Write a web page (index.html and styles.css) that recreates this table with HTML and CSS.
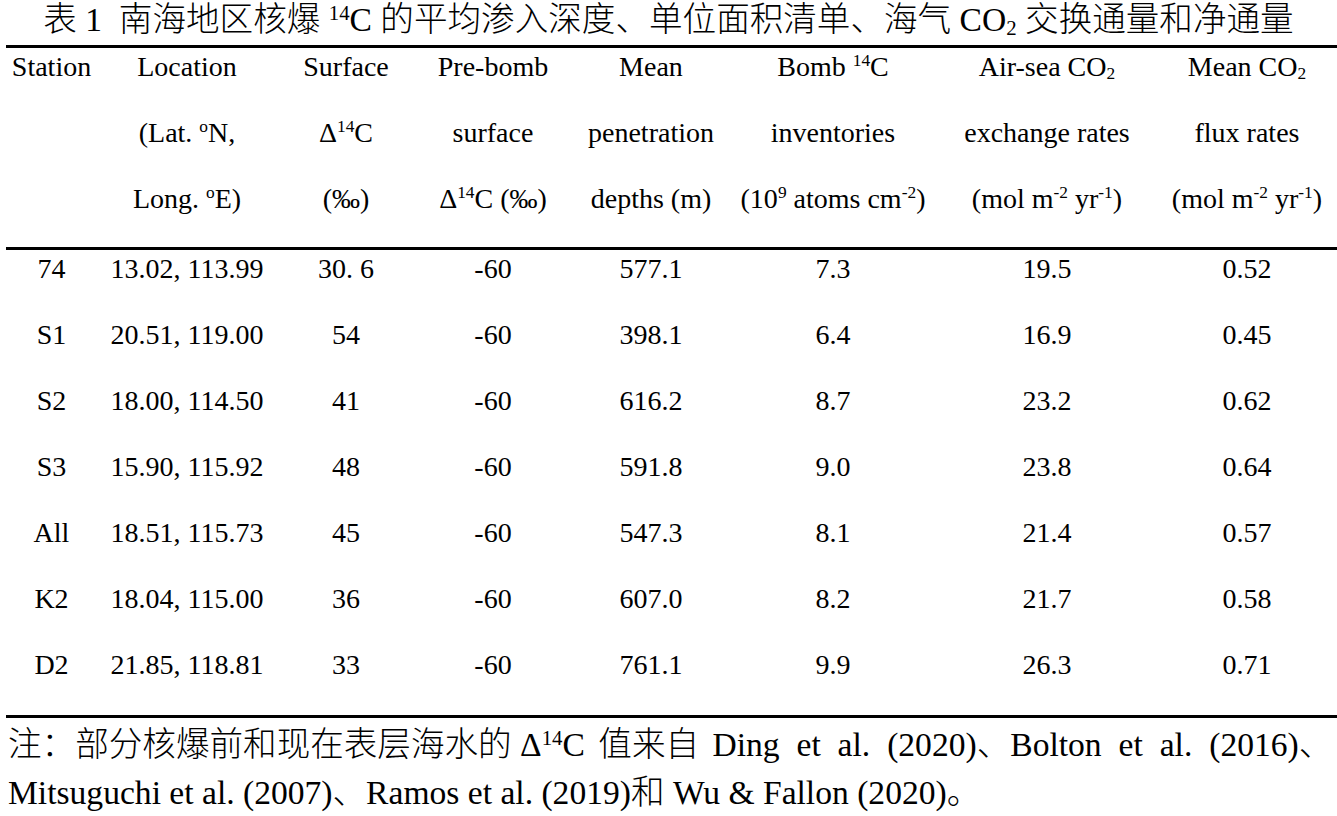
FILE: index.html
```html
<!DOCTYPE html>
<html lang="zh">
<head>
<meta charset="utf-8">
<title>表 1</title>
<link rel="stylesheet" href="styles.css">
</head>
<body>
<div class="page">
  <div class="title">表 1&nbsp; 南海地区核爆 <sup>14</sup>C 的平均渗入深度、单位面积清单、海气 CO<sub>2</sub> 交换通量和净通量</div>
  <div class="table">
    <div class="grid head">
      <div class="hcell"><span>Station</span></div>
      <div class="hcell"><span>Location</span><span>(Lat. <sup>o</sup>N,</span><span>Long. <sup>o</sup>E)</span></div>
      <div class="hcell"><span>Surface</span><span>Δ<sup>14</sup>C</span><span>(‰)</span></div>
      <div class="hcell"><span>Pre-bomb</span><span>surface</span><span>Δ<sup>14</sup>C (‰)</span></div>
      <div class="hcell"><span>Mean</span><span>penetration</span><span>depths (m)</span></div>
      <div class="hcell"><span>Bomb <sup>14</sup>C</span><span>inventories</span><span>(10<sup>9</sup> atoms cm<sup>-2</sup>)</span></div>
      <div class="hcell"><span>Air-sea CO<sub>2</sub></span><span>exchange rates</span><span>(mol m<sup>-2</sup> yr<sup>-1</sup>)</span></div>
      <div class="hcell"><span>Mean CO<sub>2</sub></span><span>flux rates</span><span>(mol m<sup>-2</sup> yr<sup>-1</sup>)</span></div>
    </div>
    <div class="grid body">
      <div>74</div><div>13.02, 113.99</div><div>30. 6</div><div>-60</div><div>577.1</div><div>7.3</div><div>19.5</div><div>0.52</div>
      <div>S1</div><div>20.51, 119.00</div><div>54</div><div>-60</div><div>398.1</div><div>6.4</div><div>16.9</div><div>0.45</div>
      <div>S2</div><div>18.00, 114.50</div><div>41</div><div>-60</div><div>616.2</div><div>8.7</div><div>23.2</div><div>0.62</div>
      <div>S3</div><div>15.90, 115.92</div><div>48</div><div>-60</div><div>591.8</div><div>9.0</div><div>23.8</div><div>0.64</div>
      <div>All</div><div>18.51, 115.73</div><div>45</div><div>-60</div><div>547.3</div><div>8.1</div><div>21.4</div><div>0.57</div>
      <div>K2</div><div>18.04, 115.00</div><div>36</div><div>-60</div><div>607.0</div><div>8.2</div><div>21.7</div><div>0.58</div>
      <div>D2</div><div>21.85, 118.81</div><div>33</div><div>-60</div><div>761.1</div><div>9.9</div><div>26.3</div><div>0.71</div>
    </div>
  </div>
  <div class="note">
    <p>注：部分核爆前和现在表层海水的 Δ<sup>14</sup>C<span class="cjkgap"> 值来自 </span><span class="spread">Ding et al. (2020)、Bolton et al. (2016)、</span></p>
    <p>Mitsuguchi et al. (2007)、Ramos et al. (2019)和 Wu &amp; Fallon (2020)。</p>
  </div>
</div>
</body>
</html>
```

FILE: styles.css
```css
html, body {
  margin: 0;
  padding: 0;
  background: #ffffff;
}
body {
  width: 1337px;
  height: 816px;
  overflow: hidden;
  color: #000;
  font-family: "Liberation Serif", "Noto Sans CJK SC", serif;
  font-weight: 300;
}
.page {
  display: flex;
  flex-direction: column;
}
sup, sub {
  font-size: 0.62em;
  line-height: 0;
}
sup { vertical-align: 0.55em; }
sub { vertical-align: -0.2em; }

.title {
  font-size: 33.6px;
  line-height: 40px;
  height: 40px;
  text-align: center;
  white-space: nowrap;
  margin-bottom: 5px;
}
.table {
  margin-left: 6px;
}
.grid {
  display: grid;
  grid-template-columns: 91px 180px 138px 156px 160px 204px 224px 176px;
  font-size: 28px;
  line-height: 38px;
  text-align: center;
  white-space: nowrap;
}
.head {
  border-top: 3px solid #000;
  padding-bottom: 29px;
}
.hcell {
  display: flex;
  flex-direction: column;
  align-items: center;
  gap: 28px;
}
.body {
  border-top: 3px solid #000;
  border-bottom: 3px solid #000;
  row-gap: 28px;
  padding-bottom: 31px;
}
.note {
  margin-top: 3px;
  padding: 0 7px 0 8px;
  font-size: 33.6px;
  line-height: 48px;
}
.note p {
  margin: 0;
  white-space: nowrap;
}
.note .cjkgap {
  word-spacing: 5px;
}
.note .spread {
  word-spacing: 8.5px;
}
```
